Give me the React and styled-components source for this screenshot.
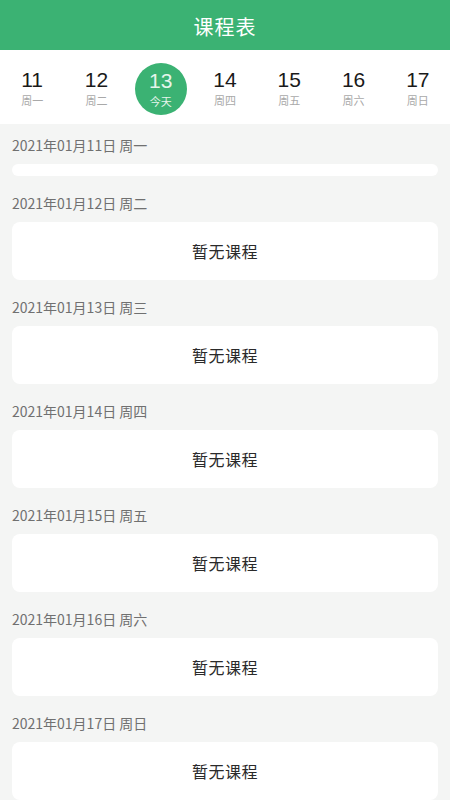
import React from 'react';
import styled, { createGlobalStyle } from 'styled-components';

const GlobalStyle = createGlobalStyle`
	html, body {
		margin: 0;
		padding: 0;
		background: #f4f5f4;
		font-family: 'Noto Sans CJK SC', 'Noto Sans', sans-serif;
	}
`;

const days = [
	{ num: '11', week: '周一' },
	{ num: '12', week: '周二' },
	{ num: '13', week: '今天', today: true },
	{ num: '14', week: '周四' },
	{ num: '15', week: '周五' },
	{ num: '16', week: '周六' },
	{ num: '17', week: '周日' },
];

const sections = [
	{ date: '2021年01月11日 周一', empty: false },
	{ date: '2021年01月12日 周二', empty: true },
	{ date: '2021年01月13日 周三', empty: true },
	{ date: '2021年01月14日 周四', empty: true },
	{ date: '2021年01月15日 周五', empty: true },
	{ date: '2021年01月16日 周六', empty: true },
	{ date: '2021年01月17日 周日', empty: true },
];

const App = () => (
	<Page>
		<GlobalStyle />
		<Header>课程表</Header>
		<DateStrip>
			{days.map(d => (
				<DayCell key={d.num}>
					<DayBadge today={d.today}>
						<DayNum today={d.today}>{d.num}</DayNum>
						<DayWeek today={d.today}>{d.week}</DayWeek>
					</DayBadge>
				</DayCell>
			))}
		</DateStrip>
		<List>
			{sections.map(s => (
				<Section key={s.date}>
					<DateLabel>{s.date}</DateLabel>
					<Card empty={s.empty}>{s.empty ? '暂无课程' : null}</Card>
				</Section>
			))}
		</List>
	</Page>
);

export default App;

const Page = styled.div`
	width: 450px;
	min-height: 800px;
	background: #f4f5f4;
	overflow: hidden;
`;

const Header = styled.div`
	height: 50px;
	background: #3bb273;
	color: #fff;
	font-size: 20px;
	display: flex;
	align-items: center;
	justify-content: center;
	padding-top: 2px;
	box-sizing: border-box;
	letter-spacing: 1px;
`;

const DateStrip = styled.div`
	height: 74px;
	background: #fff;
	display: grid;
	grid-template-columns: repeat(7, 1fr);
	align-items: center;
`;

const DayCell = styled.div`
	display: flex;
	justify-content: center;
	padding-top: 1px;
`;

const DayBadge = styled.div`
	width: 52px;
	height: 52px;
	border-radius: 50%;
	background: ${props => (props.today ? '#3bb273' : 'transparent')};
	display: flex;
	flex-direction: column;
	align-items: center;
	justify-content: center;
	gap: 4px;
	margin-top: ${props => (props.today ? '2px' : '0')};
`;

const DayNum = styled.div`
	font-family: 'Liberation Sans', Arial, sans-serif;
	font-size: 21px;
	line-height: 20px;
	color: ${props => (props.today ? '#e6f5ec' : '#1a1a1a')};
`;

const DayWeek = styled.div`
	font-size: 11px;
	line-height: 12px;
	color: ${props => (props.today ? '#e6f5ec' : '#a9a9a9')};
`;

const List = styled.div`
	display: flex;
	flex-direction: column;
	gap: 6px;
`;

const Section = styled.div`
	display: flex;
	flex-direction: column;
`;

const DateLabel = styled.div`
	padding: 11px 12px 9px;
	font-size: 14px;
	line-height: 20px;
	color: #707070;
`;

const Card = styled.div`
	margin: 0 12px;
	height: ${props => (props.empty ? '58px' : '12px')};
	background: #fff;
	border-radius: 8px;
	display: flex;
	align-items: center;
	justify-content: center;
	font-size: 16px;
	color: #2a2a2a;
	letter-spacing: 0.5px;
`;
